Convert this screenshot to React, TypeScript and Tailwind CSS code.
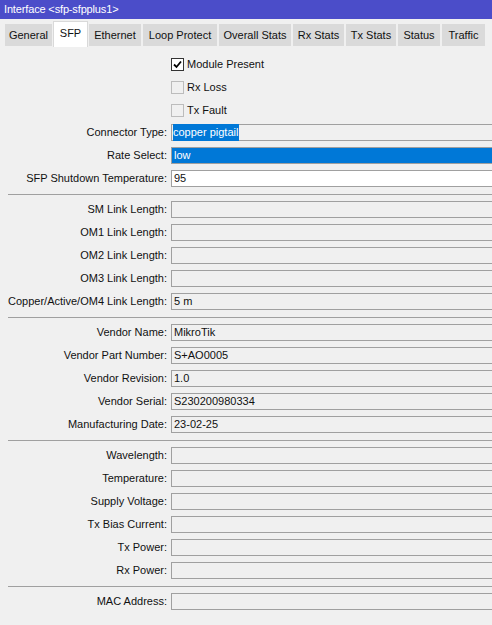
import React from "react";

const tabs = [
  { name: "General", w: 49 },
  { name: "SFP", w: 35, active: true },
  { name: "Ethernet", w: 54 },
  { name: "Loop Protect", w: 76 },
  { name: "Overall Stats", w: 74 },
  { name: "Rx Stats", w: 53 },
  { name: "Tx Stats", w: 52 },
  { name: "Status", w: 44 },
  { name: "Traffic", w: 45 },
];

type Field = { label: string; value?: string; kind?: "select" | "full" | "white" };

const sections: Field[][] = [
  [
    { label: "Connector Type", value: "copper pigtail", kind: "select" },
    { label: "Rate Select", value: "low", kind: "full" },
    { label: "SFP Shutdown Temperature", value: "95", kind: "white" },
  ],
  [
    { label: "SM Link Length" },
    { label: "OM1 Link Length" },
    { label: "OM2 Link Length" },
    { label: "OM3 Link Length" },
    { label: "Copper/Active/OM4 Link Length", value: "5 m" },
  ],
  [
    { label: "Vendor Name", value: "MikroTik" },
    { label: "Vendor Part Number", value: "S+AO0005" },
    { label: "Vendor Revision", value: "1.0" },
    { label: "Vendor Serial", value: "S230200980334" },
    { label: "Manufacturing Date", value: "23-02-25" },
  ],
  [
    { label: "Wavelength" },
    { label: "Temperature" },
    { label: "Supply Voltage" },
    { label: "Tx Bias Current" },
    { label: "Tx Power" },
    { label: "Rx Power" },
  ],
  [{ label: "MAC Address" }],
];

function Row({ f }: { f: Field }) {
  const bg =
    f.kind === "full" ? "bg-[#0078d7] text-white" : f.kind === "white" ? "bg-white" : "bg-[#f0f0f0]";
  return (
    <div className="flex h-[17px] items-center">
      <div className="w-[167px] shrink-0 whitespace-nowrap text-right">{f.label}:</div>
      <div
        className={`ml-[4px] -mr-[6px] flex h-[17px] flex-1 items-center border border-[#a0a0a0] pl-[1px] ${bg}`}
      >
        {f.kind === "select" ? (
          <span className="bg-[#0078d7] pr-[1px] text-white">{f.value}</span>
        ) : (
          <span className="pl-[1px]">{f.value}</span>
        )}
      </div>
    </div>
  );
}

function Check({ label, checked }: { label: string; checked?: boolean }) {
  return (
    <div className="flex h-[17px] items-center pl-[171px] pt-[1px]">
      <div
        className={`flex h-[13px] w-[13px] items-center justify-center border ${
          checked ? "border-[#333333] bg-white" : "border-[#bcbcbc] bg-[#f0f0f0]"
        }`}
      >
        {checked && (
          <svg width="9" height="9" viewBox="0 0 9 9">
            <polyline points="1,4.5 3.5,7 8,1.5" fill="none" stroke="#000" strokeWidth="1.8" />
          </svg>
        )}
      </div>
      <span className="ml-[3px]">{label}</span>
    </div>
  );
}

export default function App() {
  return (
    <div
      className="h-[625px] w-[492px] overflow-hidden bg-[#f0f0f0] text-[11px] text-[#111]"
      style={{ fontFamily: '"Liberation Sans", Arial, sans-serif' }}
    >
      <div className="flex h-[19px] items-center bg-[#4b4dc9] pl-[4px] text-[11px] tracking-[-0.15px] text-white">
        Interface &lt;sfp-sfpplus1&gt;
      </div>
      <div className="flex h-[28px] items-end pl-[4px]">
        {tabs.map((t) =>
          t.active ? (
            <div
              key={t.name}
              style={{ width: t.w }}
              className="flex h-[26px] items-center justify-center border border-b-0 border-[#d9d9d9] bg-white pb-[3px]"
            >
              {t.name}
            </div>
          ) : (
            <div
              key={t.name}
              style={{ width: t.w }}
              className="flex h-[24px] items-center justify-center border border-[#f0f0f0] bg-[#dadada]"
            >
              {t.name}
            </div>
          )
        )}
      </div>
      <div className="flex flex-col pt-[8px]">
        <div className="flex flex-col gap-[6px]">
          <Check label="Module Present" checked />
          <Check label="Rx Loss" />
          <Check label="Tx Fault" />
        </div>
        {sections.map((s, i) => (
          <div key={i}>
            {i > 0 && <div className="mb-[6px] ml-[8px] mt-[7px] h-px bg-[#a0a0a0]" />}
            <div className={`flex flex-col gap-[6px] ${i === 0 ? "mt-[6px]" : ""}`}>
              {s.map((f) => (
                <Row key={f.label} f={f} />
              ))}
            </div>
          </div>
        ))}
      </div>
    </div>
  );
}
